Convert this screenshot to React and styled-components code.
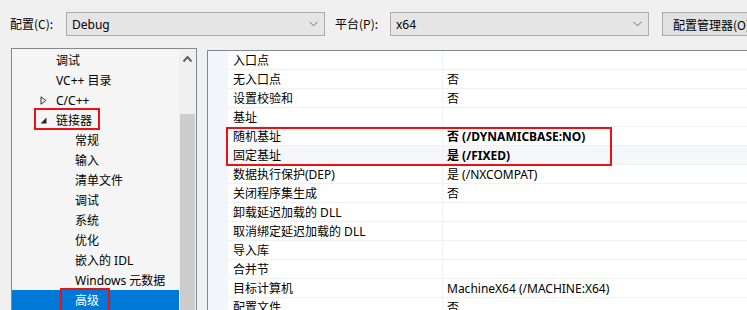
import React from "react";
import styled, { createGlobalStyle } from "styled-components";

const Global = createGlobalStyle`
  html, body { margin: 0; padding: 0; background: #f0f0f0; overflow: hidden; }
  body { font-family: "Noto Sans", "Noto Sans CJK SC", sans-serif; font-size: 12px; color: #000; }
`;

const Page = styled.div`
  width: 747px;
  height: 310px;
  overflow: hidden;
  background: #f0f0f0;
`;

const TopBar = styled.div`
  display: flex;
  align-items: center;
  height: 48px;
  padding-left: 10px;
  & > * { flex-shrink: 0; }
`;

const Label = styled.div`
  width: ${(p) => p.$w}px;
  margin-left: ${(p) => p.$ml || 0}px;
  white-space: nowrap;
  font-family: "Noto Sans CJK SC", sans-serif;
  line-height: 16px;
`;

const Combo = styled.div`
  box-sizing: border-box;
  width: ${(p) => p.$w}px;
  height: 24px;
  border: 1px solid #adadad;
  background: #e5e5e5;
  display: flex;
  align-items: center;
  justify-content: space-between;
  padding: 0 6px 0 5px;
`;

const Button = styled.div`
  box-sizing: border-box;
  margin-left: 13px;
  width: 100px;
  height: 24px;
  border: 1px solid #adadad;
  border-right: none;
  background: #e1e1e1;
  display: flex;
  align-items: center;
  padding-left: 10px;
  white-space: nowrap;
  overflow: hidden;
  font-family: "Noto Sans CJK SC", sans-serif;
`;

const Body = styled.div`
  display: flex;
  align-items: flex-start;
`;

const TreePanel = styled.div`
  box-sizing: border-box;
  flex-shrink: 0;
  margin-left: 11px;
  width: 186px;
  height: 300px;
  border: 1px solid #828790;
  background: #f5f5f5;
  display: flex;
`;

const TreeList = styled.div`
  flex: 1;
  padding-top: 1px;
  display: flex;
  flex-direction: column;
`;

const TreeRow = styled.div`
  position: relative;
  height: 20px;
  display: flex;
  align-items: center;
  padding-left: ${(p) => (p.$level ? 63 : 44)}px;
  background: ${(p) => (p.$selected ? "#0078d7" : "transparent")};
  color: ${(p) => (p.$selected ? "#fff" : "#000")};
  font-family: "Noto Sans", "Noto Sans CJK SC", sans-serif;
  white-space: nowrap;
`;

const Expander = styled.svg`
  position: absolute;
  left: 28px;
  top: 6px;
`;

const RedBox = styled.div`
  position: absolute;
  left: ${(p) => p.$l}px;
  top: ${(p) => p.$t}px;
  width: ${(p) => p.$w}px;
  height: ${(p) => p.$h}px;
  box-sizing: border-box;
  border: 2px solid #ee1111;
  pointer-events: none;
`;

const ScrollBar = styled.div`
  width: 17px;
  background: #f0f0f0;
  display: flex;
  flex-direction: column;
  align-items: center;
  padding-top: 7px;
  box-sizing: border-box;
`;

const Thumb = styled.div`
  margin-top: 52px;
  width: 15px;
  flex: 1;
  background: #cdcdcd;
`;

const PropPanel = styled.div`
  box-sizing: border-box;
  margin-left: 10px;
  margin-top: 2px;
  flex: 1;
  height: 300px;
  border-top: 1px solid #828790;
  border-left: 1px solid #828790;
  background: #fff;
  display: flex;
  flex-direction: column;
`;

const PropRow = styled.div`
  display: flex;
  flex-shrink: 0;
  height: 19px;
  background: ${(p) => (p.$tint ? "#f5f7fa" : "#fff")};
`;

const Gutter = styled.div`
  width: 20px;
  background: #f2f5fa;
`;

const NameCell = styled.div`
  box-sizing: border-box;
  width: 215px;
  padding-left: 5px;
  border-bottom: 1px solid #eff1f5;
  border-right: 1px solid #eff1f5;
  display: flex;
  align-items: center;
  white-space: nowrap;
  font-family: "Noto Sans", "Noto Sans CJK SC", sans-serif;
`;

const ValueCell = styled.div`
  box-sizing: border-box;
  flex: 1;
  padding-left: 4px;
  border-bottom: 1px solid #eff1f5;
  display: flex;
  align-items: center;
  white-space: nowrap;
  font-weight: ${(p) => (p.$bold ? 700 : 400)};
  font-family: "Noto Sans", "Noto Sans CJK SC", sans-serif;
`;

const Group = styled.div`
  position: relative;
  flex-shrink: 0;
`;

const Chevron = () => (
  <svg width="9" height="6" viewBox="0 0 9 6">
    <polyline points="0.5,0.8 4.5,4.8 8.5,0.8" fill="none" stroke="#707070" strokeWidth="1" />
  </svg>
);

const UpArrow = () => (
  <svg width="9" height="6" viewBox="0 0 9 6">
    <path d="M0.5 5.5 L4.5 1 L8.5 5.5" fill="none" stroke="#606060" strokeWidth="2" />
  </svg>
);

const tree = [
  { t: "调试", level: 0 },
  { t: "VC++ 目录", level: 0 },
  { t: "C/C++", level: 0, exp: "closed" },
  { t: "链接器", level: 0, exp: "open", box: [22, -2, 66, 22] },
  { t: "常规", level: 1 },
  { t: "输入", level: 1 },
  { t: "清单文件", level: 1 },
  { t: "调试", level: 1 },
  { t: "系统", level: 1 },
  { t: "优化", level: 1 },
  { t: "嵌入的 IDL", level: 1 },
  { t: "Windows 元数据", level: 1 },
  { t: "高级", level: 1, selected: true, box: [48, -2, 50, 24] },
];

const props1 = [
  ["入口点", ""],
  ["无入口点", "否"],
  ["设置校验和", "否"],
  ["基址", ""],
];
const propsHi = [
  ["随机基址", "否 (/DYNAMICBASE:NO)"],
  ["固定基址", "是 (/FIXED)"],
];
const props2 = [
  ["数据执行保护(DEP)", "是 (/NXCOMPAT)"],
  ["关闭程序集生成", "否"],
  ["卸载延迟加载的 DLL", ""],
  ["取消绑定延迟加载的 DLL", ""],
  ["导入库", ""],
  ["合并节", ""],
  ["目标计算机", "MachineX64 (/MACHINE:X64)"],
  ["配置文件", "否"],
];

const Row = ({ name, value, bold, tint }) => (
  <PropRow $tint={tint}>
    <Gutter />
    <NameCell>{name}</NameCell>
    <ValueCell $bold={bold}>{value}</ValueCell>
  </PropRow>
);

export default function App() {
  return (
    <Page>
      <Global />
      <TopBar>
        <Label $w={56}>配置(C):</Label>
        <Combo $w={259}>
          <span>Debug</span>
          <Chevron />
        </Combo>
        <Label $w={55} $ml={10}>平台(P):</Label>
        <Combo $w={259}>
          <span>x64</span>
          <Chevron />
        </Combo>
        <Button>配置管理器(O)</Button>
      </TopBar>
      <Body>
        <TreePanel>
          <TreeList>
            {tree.map((n, i) => (
              <TreeRow key={i} $level={n.level} $selected={n.selected}>
                {n.exp === "closed" && (
                  <Expander width="7" height="9" viewBox="0 0 7 9">
                    <path d="M1 0.8 L5.8 4.5 L1 8.2 Z" fill="none" stroke="#333" strokeWidth="1" />
                  </Expander>
                )}
                {n.exp === "open" && (
                  <Expander width="7" height="9" viewBox="0 0 7 9">
                    <path d="M6.5 1.5 L6.5 7.5 L0.5 7.5 Z" fill="#262626" />
                  </Expander>
                )}
                {n.t}
                {n.box && <RedBox $l={n.box[0]} $t={n.box[1]} $w={n.box[2]} $h={n.box[3]} />}
              </TreeRow>
            ))}
          </TreeList>
          <ScrollBar>
            <UpArrow />
            <Thumb />
          </ScrollBar>
        </TreePanel>
        <PropPanel>
          {props1.map(([n, v], i) => (
            <Row key={i} name={n} value={v} />
          ))}
          <Group>
            {propsHi.map(([n, v], i) => (
              <Row key={i} name={n} value={v} bold tint={i === 1} />
            ))}
            <RedBox $l={18} $t={0} $w={386} $h={39} />
          </Group>
          {props2.map(([n, v], i) => (
            <Row key={i} name={n} value={v} />
          ))}
        </PropPanel>
      </Body>
    </Page>
  );
}
